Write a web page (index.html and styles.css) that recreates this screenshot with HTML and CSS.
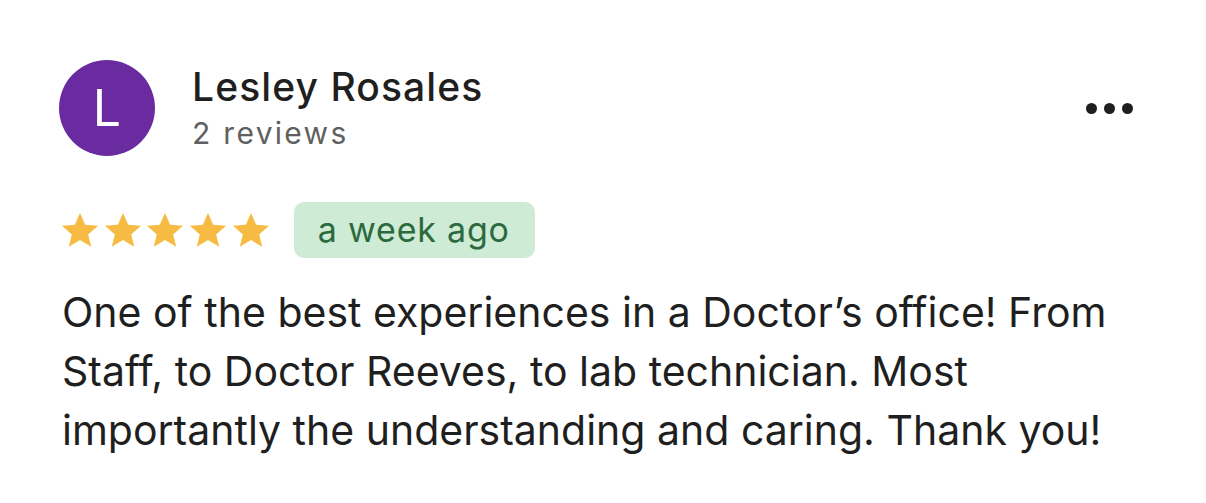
FILE: index.html
```html
<!DOCTYPE html>
<html lang="en">
<head>
<meta charset="utf-8">
<title>Review</title>
<link rel="stylesheet" href="styles.css">
</head>
<body>
<article class="review">
  <header class="review-head">
    <div class="avatar">L</div>
    <div class="author">
      <div class="author-name">Lesley Rosales</div>
      <div class="author-meta">2 reviews</div>
    </div>
    <button class="more" aria-label="More options">
      <span class="dot"></span><span class="dot"></span><span class="dot"></span>
    </button>
  </header>
  <div class="review-rating">
    <div class="stars" aria-label="5 stars">
      <svg class="star" viewBox="1.9 2.2 20.2 18.8"><path d="M12 2.2l2.9 6.6 7.2.6-5.5 4.8 1.7 7-6.3-3.8-6.3 3.8 1.7-7L1.9 9.4l7.2-.6z"/></svg>
      <svg class="star" viewBox="1.9 2.2 20.2 18.8"><path d="M12 2.2l2.9 6.6 7.2.6-5.5 4.8 1.7 7-6.3-3.8-6.3 3.8 1.7-7L1.9 9.4l7.2-.6z"/></svg>
      <svg class="star" viewBox="1.9 2.2 20.2 18.8"><path d="M12 2.2l2.9 6.6 7.2.6-5.5 4.8 1.7 7-6.3-3.8-6.3 3.8 1.7-7L1.9 9.4l7.2-.6z"/></svg>
      <svg class="star" viewBox="1.9 2.2 20.2 18.8"><path d="M12 2.2l2.9 6.6 7.2.6-5.5 4.8 1.7 7-6.3-3.8-6.3 3.8 1.7-7L1.9 9.4l7.2-.6z"/></svg>
      <svg class="star" viewBox="1.9 2.2 20.2 18.8"><path d="M12 2.2l2.9 6.6 7.2.6-5.5 4.8 1.7 7-6.3-3.8-6.3 3.8 1.7-7L1.9 9.4l7.2-.6z"/></svg>
    </div>
    <span class="badge">a week ago</span>
  </div>
  <p class="review-text">One of the best experiences in a Doctor’s office! From Staff, to Doctor Reeves, to lab technician. Most importantly the understanding and caring. Thank you!</p>
</article>
</body>
</html>
```

FILE: styles.css
```css
html, body {
  margin: 0;
  padding: 0;
  background: #ffffff;
}

body {
  font-family: Inter, "Noto Sans", Arial, sans-serif;
  color: #1f1f1f;
}

.review {
  padding: 60px 60px 0 62px;
}

.review-head {
  display: flex;
  align-items: flex-start;
}

.avatar {
  width: 96px;
  height: 96px;
  margin-left: -3px;
  border-radius: 50%;
  background: #6b2ba0;
  color: #ffffff;
  font-size: 50px;
  line-height: 1;
  display: flex;
  align-items: center;
  justify-content: center;
  flex: none;
}

.author {
  margin: 3px 0 0 37px;
  flex: 1;
}

.author-name {
  font-size: 39px;
  font-weight: 500;
  letter-spacing: 1.1px;
  line-height: 48px;
  color: #1f1f1f;
}

.author-meta {
  margin-top: 2px;
  font-size: 30px;
  letter-spacing: 2.3px;
  line-height: 40px;
  color: #606060;
}

.more {
  border: 0;
  background: none;
  padding: 0;
  display: flex;
  gap: 7px;
  align-self: center;
  margin-right: 13px;
}

.dot {
  width: 11px;
  height: 11px;
  border-radius: 50%;
  background: #1f1f1f;
}

.review-rating {
  display: flex;
  align-items: center;
  margin-top: 46px;
}

.stars {
  display: flex;
  gap: 6.7px;
}

.star {
  width: 36px;
  height: 33.5px;
  fill: #f6bb43;
}

.badge {
  margin-left: 25px;
  background: #cdebd5;
  color: #2c6a3d;
  border-radius: 10px;
  font-size: 34px;
  letter-spacing: 0.8px;
  line-height: 56px;
  padding: 0 25px 0 24px;
}

.review-text {
  margin: 25px 0 0;
  font-size: 41px;
  line-height: 59px;
  color: #1f1f1f;
}
```
